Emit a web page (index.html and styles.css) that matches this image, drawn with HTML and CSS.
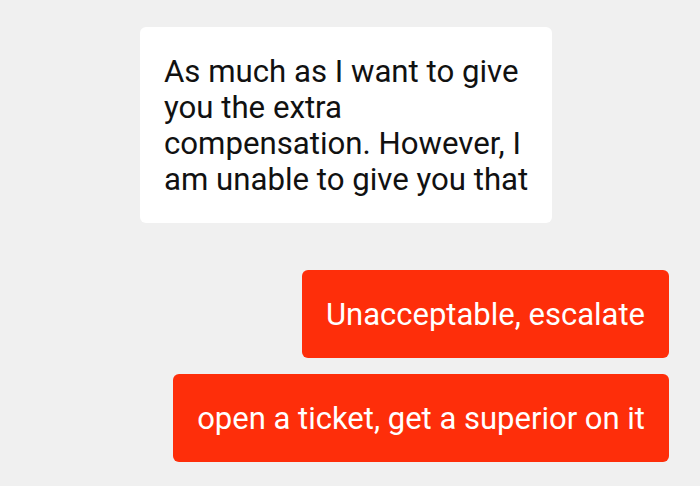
FILE: index.html
```html
<!DOCTYPE html>
<html lang="en">
<head>
    <meta charset="UTF-8">
    <meta name="viewport" content="width=device-width, initial-scale=1.0">
    <title>Chat</title>
    <link rel="stylesheet" href="styles.css">
</head>
<body>
    <div class="chat">
        <div class="bubble incoming">As much as I want to give you the extra compensation. However, I am unable to give you that</div>
        <div class="bubble outgoing first">Unacceptable, escalate</div>
        <div class="bubble outgoing">open a ticket, get a superior on it</div>
    </div>
</body>
</html>
```

FILE: styles.css
```css
body {
    margin: 0;
    background-color: #f0f0f0;
    font-family: Roboto, "Liberation Sans", sans-serif;
}
.chat {
    display: flex;
    flex-direction: column;
    padding: 27px 31px 0 140px;
}
.bubble {
    border-radius: 6px;
    padding: 0 24px;
    font-size: 31.2px;
    box-sizing: border-box;
}
.incoming {
    align-self: flex-start;
    width: 412px;
    padding: 27px 16px 25px 24px;
    line-height: 36px;
    background-color: #fff;
    color: #111;
}
.outgoing {
    align-self: flex-end;
    height: 88px;
    display: flex;
    align-items: center;
    margin-top: 16px;
    font-size: 31px;
    background-color: #fe2e0a;
    color: #fff;
}
.outgoing.first {
    margin-top: 47px;
}
```
